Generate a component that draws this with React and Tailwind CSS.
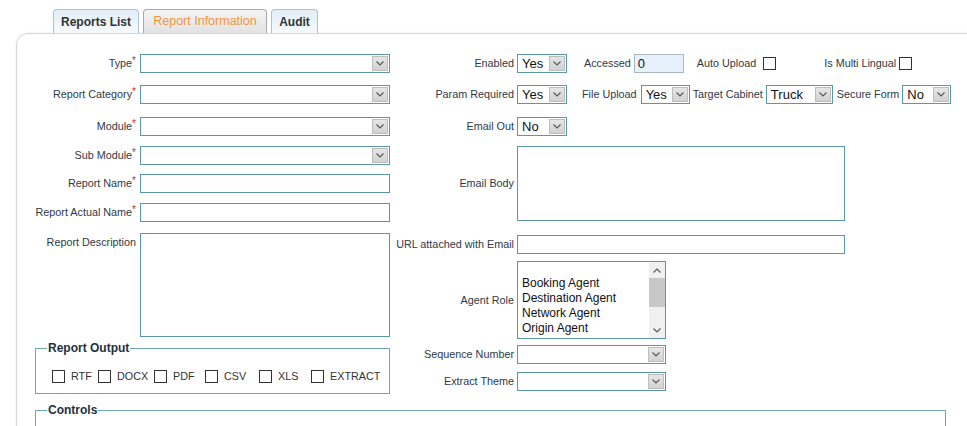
import React from "react";

const font = "font-['Liberation_Sans',Arial,sans-serif]";
const lbl = "text-[10.8px] leading-[13px] text-[#2f3945]";

function Chevron({ up }) {
  return (
    <svg width="8" height="5" viewBox="0 0 8 5" className="block">
      <path d={up ? "M0.5 4.5 L4 1 L7.5 4.5" : "M0.5 0.5 L4 4 L7.5 0.5"} fill="none" stroke="#555" strokeWidth="1.1" />
    </svg>
  );
}

function Select({ value = "", w }) {
  return (
    <div className={`flex h-[19px] items-stretch border border-[#5b98a5] bg-white ${w}`}>
      <div className="flex-1 pl-[4px] text-[13px] leading-[17px] text-[#111]">{value}</div>
      <div className="m-[1px] flex w-[16px] items-center justify-center border border-[#bdbdbd] bg-linear-to-b from-[#e6e6e6] to-[#d2d2d2]">
        <Chevron />
      </div>
    </div>
  );
}

function Label({ children, req, w = "w-[119px]", className = "" }) {
  return (
    <div className={`${w} shrink-0 text-right ${lbl} ${className}`}>
      {children}
      {req && <span className="relative -top-[3px] text-[10px] text-[#c0302a]">*</span>}
    </div>
  );
}

function Check() {
  return <div className="h-[13px] w-[13px] shrink-0 border border-[#333] bg-white" />;
}

function LeftRow({ label, req, children, className = "", align = "items-center", labelClass = "" }) {
  return (
    <div className={`flex ${align} ${className}`}>
      <Label req={req} className={labelClass}>{label}</Label>
      <div className="ml-[4px]">{children}</div>
    </div>
  );
}

function MidRow({ label, children, className = "" }) {
  return (
    <div className={`flex items-center ${className}`}>
      <Label w="w-[124px]">{label}</Label>
      <div className="ml-[3px] flex items-center">{children}</div>
    </div>
  );
}

const outputs = [
  ["RTF", "w-[46px]"],
  ["DOCX", "w-[56px]"],
  ["PDF", "w-[51px]"],
  ["CSV", "w-[54px]"],
  ["XLS", "w-[52px]"],
  ["EXTRACT", "w-[70px]"],
];

export default function App() {
  return (
    <div className={`h-[426px] w-[967px] overflow-hidden bg-white ${font}`}>
      <div className="relative z-10 flex gap-[4px] pl-[53px] pt-[9px]">
        <div className="flex h-[24px] w-[86px] items-center justify-center rounded-t-[4px] border border-b-0 border-[#a3c4db] bg-linear-to-b from-[#e2eef8] to-[#f6fafd] text-[12px] font-bold text-[#333]">
          Reports List
        </div>
        <div className="flex h-[24px] w-[124px] items-center justify-center rounded-t-[4px] border border-b-0 border-[#a9a9a9] bg-linear-to-b from-[#f4f4f4] to-[#e2e2e2] text-[12.5px] text-[#ef963f]">
          Report Information
        </div>
        <div className="flex h-[24px] w-[47px] items-center justify-center rounded-t-[4px] border border-b-0 border-[#a3c4db] bg-linear-to-b from-[#e2eef8] to-[#f6fafd] text-[12px] font-bold text-[#333]">
          Audit
        </div>
      </div>

      <div className="ml-[16px] h-[500px] w-[1000px] rounded-tl-[12px] border border-[#d6d6d6] bg-white shadow-[0_0_3px_rgba(0,0,0,0.08)]">
        <div className="flex pt-[20px]">
          {/* left column */}
          <div className="w-[373px] shrink-0">
            <LeftRow label="Type" req>
              <Select w="w-[250px]" />
            </LeftRow>
            <LeftRow label="Report Category" req className="mt-[12px]">
              <Select w="w-[250px]" />
            </LeftRow>
            <LeftRow label="Module" req className="mt-[13px]">
              <Select w="w-[250px]" />
            </LeftRow>
            <LeftRow label="Sub Module" req className="mt-[10px]">
              <Select w="w-[250px]" />
            </LeftRow>
            <LeftRow label="Report Name" req className="mt-[9px]">
              <div className="h-[19px] w-[250px] border border-[#5b98a5] bg-white" />
            </LeftRow>
            <LeftRow label="Report Actual Name" req className="mt-[10px]">
              <div className="h-[19px] w-[250px] border border-[#5b98a5] bg-white" />
            </LeftRow>
            <LeftRow label="Report Description" className="mt-[11px]" align="items-start" labelClass="pt-[3px]">
              <div className="h-[104px] w-[250px] border border-[#5b98a5] bg-white" />
            </LeftRow>

            <fieldset className="ml-[18px] mt-[4px] w-[355px] border border-[#6fa6b2] pb-[10px] pt-[1px]">
              <legend className="ml-[11px] px-[1px] text-[12px] leading-[14px] font-bold text-[#23313d]">Report Output</legend>
              <div className="mt-[14px] flex items-center pl-[16px]">
                {outputs.map(([t, w]) => (
                  <div key={t} className={`flex items-center ${w}`}>
                    <Check />
                    <span className={`ml-[6px] ${lbl} text-[#333]`}>{t}</span>
                  </div>
                ))}
              </div>
            </fieldset>
          </div>

          {/* middle column */}
          <div className="shrink-0">
            <MidRow label="Enabled">
              <Select value="Yes" w="w-[50px]" />
              <span className={`ml-[17px] ${lbl}`}>Accessed</span>
              <div className="ml-[3px] h-[19px] w-[50px] border border-[#a9b8c6] bg-[#e8f0fb] pl-[3px] text-[13px] leading-[17px] text-[#111]">0</div>
              <span className={`ml-[13px] ${lbl}`}>Auto Upload</span>
              <div className="ml-[7px]"><Check /></div>
              <span className={`ml-[48px] ${lbl}`}>Is Multi Lingual</span>
              <div className="ml-[3px]"><Check /></div>
            </MidRow>
            <MidRow label="Param Required" className="mt-[12px]">
              <Select value="Yes" w="w-[50px]" />
              <span className={`ml-[15px] ${lbl}`}>File Upload</span>
              <div className="ml-[4px]"><Select value="Yes" w="w-[49px]" /></div>
              <span className={`ml-[3px] ${lbl}`}>Target Cabinet</span>
              <div className="ml-[3px]"><Select value="Truck" w="w-[67px]" /></div>
              <span className={`ml-[4px] ${lbl}`}>Secure Form</span>
              <div className="ml-[3px]"><Select value="No" w="w-[49px]" /></div>
            </MidRow>
            <MidRow label="Email Out" className="mt-[13px]">
              <Select value="No" w="w-[50px]" />
            </MidRow>
            <MidRow label="Email Body" className="mt-[10px]">
              <div className="h-[75px] w-[328px] border border-[#5b98a5] bg-white" />
            </MidRow>
            <MidRow label="URL attached with Email" className="mt-[14px]">
              <div className="h-[19px] w-[328px] border border-[#5b98a5] bg-white" />
            </MidRow>
            <MidRow label="Agent Role" className="mt-[7px]">
              <div className="flex h-[78px] w-[149px] border border-[#5b98a5] bg-white">
                <div className="flex-1 pl-[4px] text-[12px] leading-[15px] text-[#111]">
                  <div className="h-[14px]" />
                  <div>Booking Agent</div>
                  <div>Destination Agent</div>
                  <div>Network Agent</div>
                  <div>Origin Agent</div>
                </div>
                <div className="flex w-[16px] flex-col bg-[#f0f0f0]">
                  <div className="flex h-[16px] items-center justify-center"><Chevron up /></div>
                  <div className="h-[29px] bg-[#c8c8c8]" />
                  <div className="flex-1" />
                  <div className="flex h-[16px] items-center justify-center"><Chevron /></div>
                </div>
              </div>
            </MidRow>
            <MidRow label="Sequence Number" className="mt-[6px]">
              <Select w="w-[149px]" />
            </MidRow>
            <MidRow label="Extract Theme" className="mt-[8px]">
              <Select w="w-[149px]" />
            </MidRow>
          </div>
        </div>

        <fieldset className="ml-[18px] mt-[9px] h-[100px] w-[911px] border border-[#6fa6b2]">
          <legend className="ml-[11px] px-[1px] text-[12px] leading-[14px] font-bold text-[#23313d]">Controls</legend>
        </fieldset>
      </div>
    </div>
  );
}
